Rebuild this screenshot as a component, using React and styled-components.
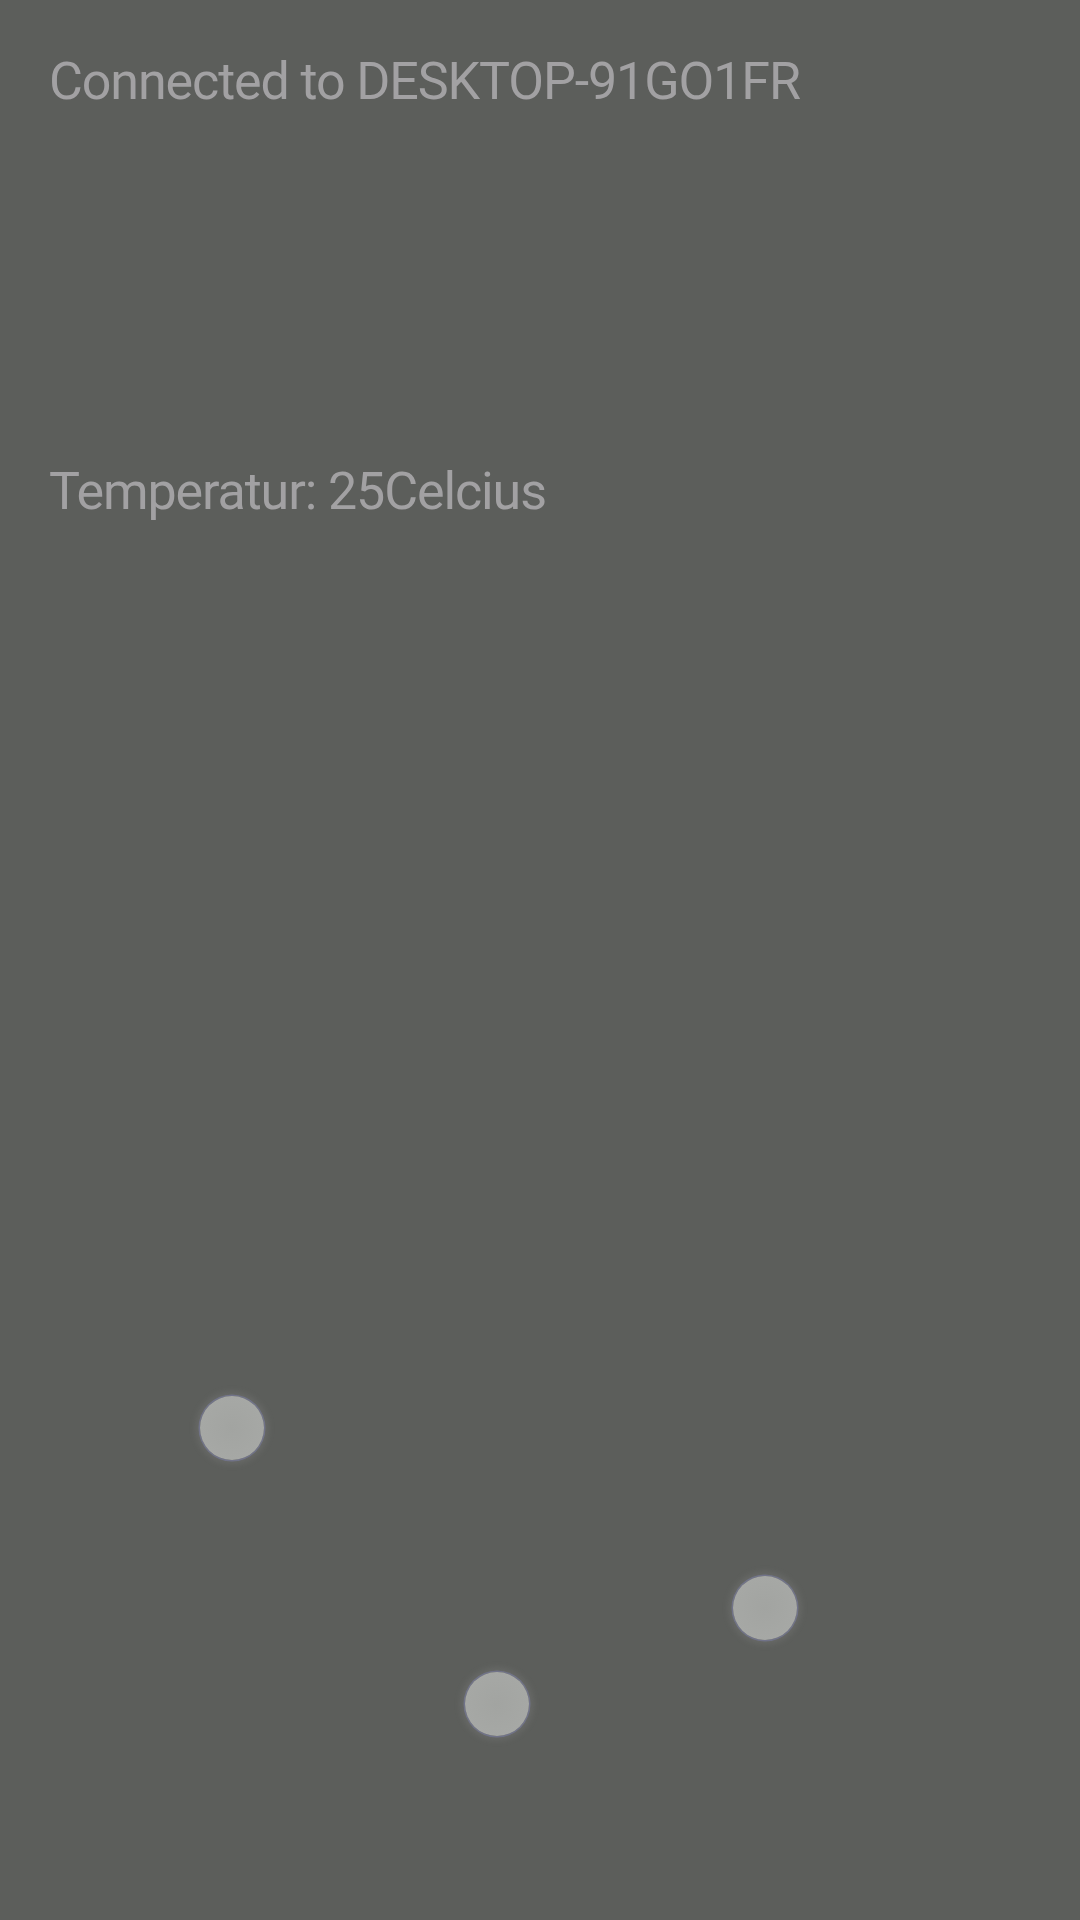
import React from "react";
import styled, { createGlobalStyle } from "styled-components";

const GlobalStyle = createGlobalStyle`
  html, body {
    margin: 0;
    padding: 0;
    background: #5c5e5b;
  }
  body {
    font-family: Roboto, "Noto Sans", sans-serif;
  }
`;

const touches = [
  { x: 232, y: 1428 },
  { x: 497, y: 1704 },
  { x: 765, y: 1608 },
];

export default function App() {
  return (
    <>
      <GlobalStyle />
      <Screen>
        <Status>Connected to DESKTOP-91GO1FR</Status>
        <Reading>Temperatur: 25Celcius</Reading>
        {touches.map((t, i) => (
          <Touch key={i} style={{ left: t.x - 32, top: t.y - 32 }} />
        ))}
      </Screen>
    </>
  );
}

const Screen = styled.main`
  position: relative;
  width: 1080px;
  height: 1920px;
  box-sizing: border-box;
  padding: 50px 48px 0 49px;
  background: #5c5e5b;
  overflow: hidden;
  display: flex;
  flex-direction: column;
`;

const Label = styled.div`
  font-family: Roboto, "Noto Sans", sans-serif;
  font-size: 52px;
  letter-spacing: -1.1px;
  line-height: 64px;
  color: #a2a1a3;
  white-space: nowrap;
`;

const Status = styled(Label)``;

const Reading = styled(Label)`
  margin-top: 346px;
`;

const Touch = styled.div`
  position: absolute;
  width: 64px;
  height: 64px;
  border-radius: 50%;
  background: radial-gradient(circle, #a2a4a1 0%, #a6a8a5 70%, #a0a29f 100%);
  box-shadow: 0 0 0 1.5px rgba(120, 124, 160, 0.6),
    0 0 7px 4px rgba(160, 162, 160, 0.2);
`;
